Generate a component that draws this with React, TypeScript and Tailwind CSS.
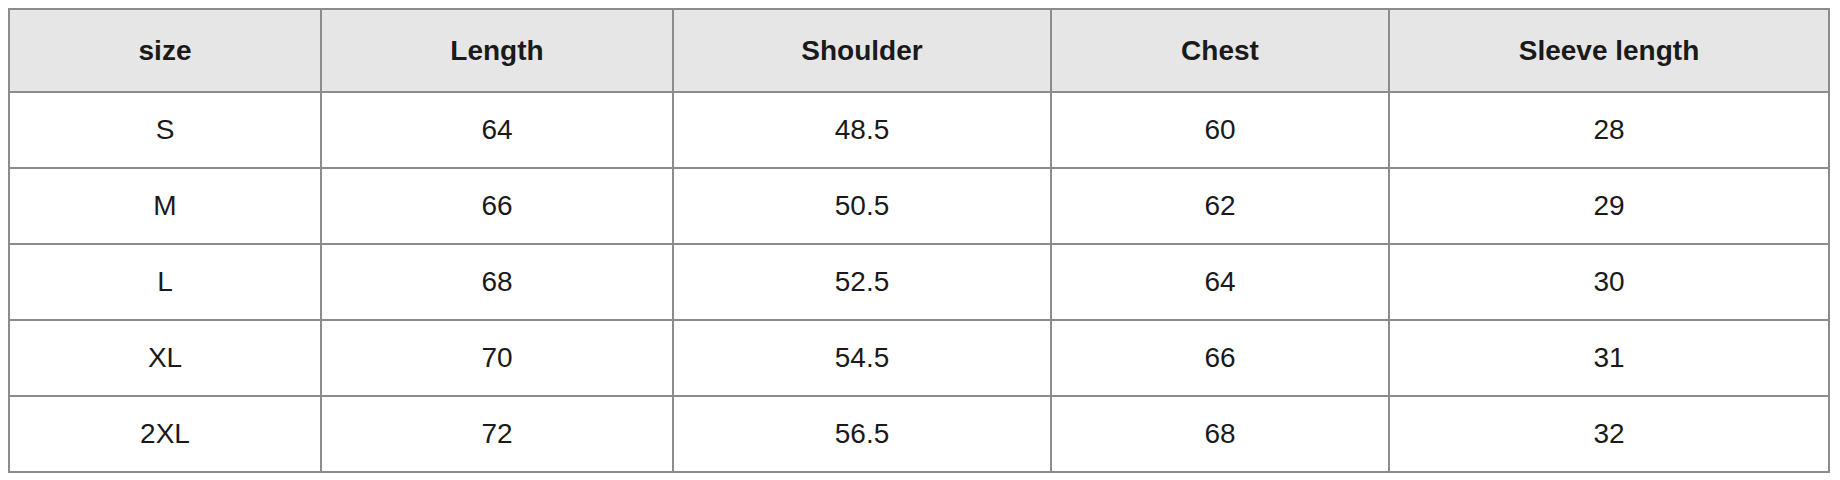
import React from 'react';

interface SizeRow {
  size: string;
  length: string;
  shoulder: string;
  chest: string;
  sleeve: string;
}

const rows: SizeRow[] = [
  { size: 'S', length: '64', shoulder: '48.5', chest: '60', sleeve: '28' },
  { size: 'M', length: '66', shoulder: '50.5', chest: '62', sleeve: '29' },
  { size: 'L', length: '68', shoulder: '52.5', chest: '64', sleeve: '30' },
  { size: 'XL', length: '70', shoulder: '54.5', chest: '66', sleeve: '31' },
  { size: '2XL', length: '72', shoulder: '56.5', chest: '68', sleeve: '32' },
];

const headers = ['size', 'Length', 'Shoulder', 'Chest', 'Sleeve length'];

const App: React.FC = () => {
  return (
    <div className="min-h-screen bg-white pt-2 pl-2 font-['Liberation_Sans',Arial,sans-serif] text-[#1a1a1a]">
      <table className="table-fixed border-collapse w-[1820px] text-[28px]">
        <colgroup>
          <col className="w-[312px]" />
          <col className="w-[352px]" />
          <col className="w-[378px]" />
          <col className="w-[338px]" />
          <col className="w-[440px]" />
        </colgroup>
        <thead>
          <tr className="h-[83px] bg-[#e6e6e6]">
            {headers.map((h) => (
              <th key={h} className="border-2 border-[#8c8c8c] font-bold text-center align-middle">
                {h}
              </th>
            ))}
          </tr>
        </thead>
        <tbody>
          {rows.map((r) => (
            <tr key={r.size} className="h-[76px]">
              <td className="border-2 border-[#8c8c8c] text-center align-middle">{r.size}</td>
              <td className="border-2 border-[#8c8c8c] text-center align-middle">{r.length}</td>
              <td className="border-2 border-[#8c8c8c] text-center align-middle">{r.shoulder}</td>
              <td className="border-2 border-[#8c8c8c] text-center align-middle">{r.chest}</td>
              <td className="border-2 border-[#8c8c8c] text-center align-middle">{r.sleeve}</td>
            </tr>
          ))}
        </tbody>
      </table>
    </div>
  );
};

export default App;
